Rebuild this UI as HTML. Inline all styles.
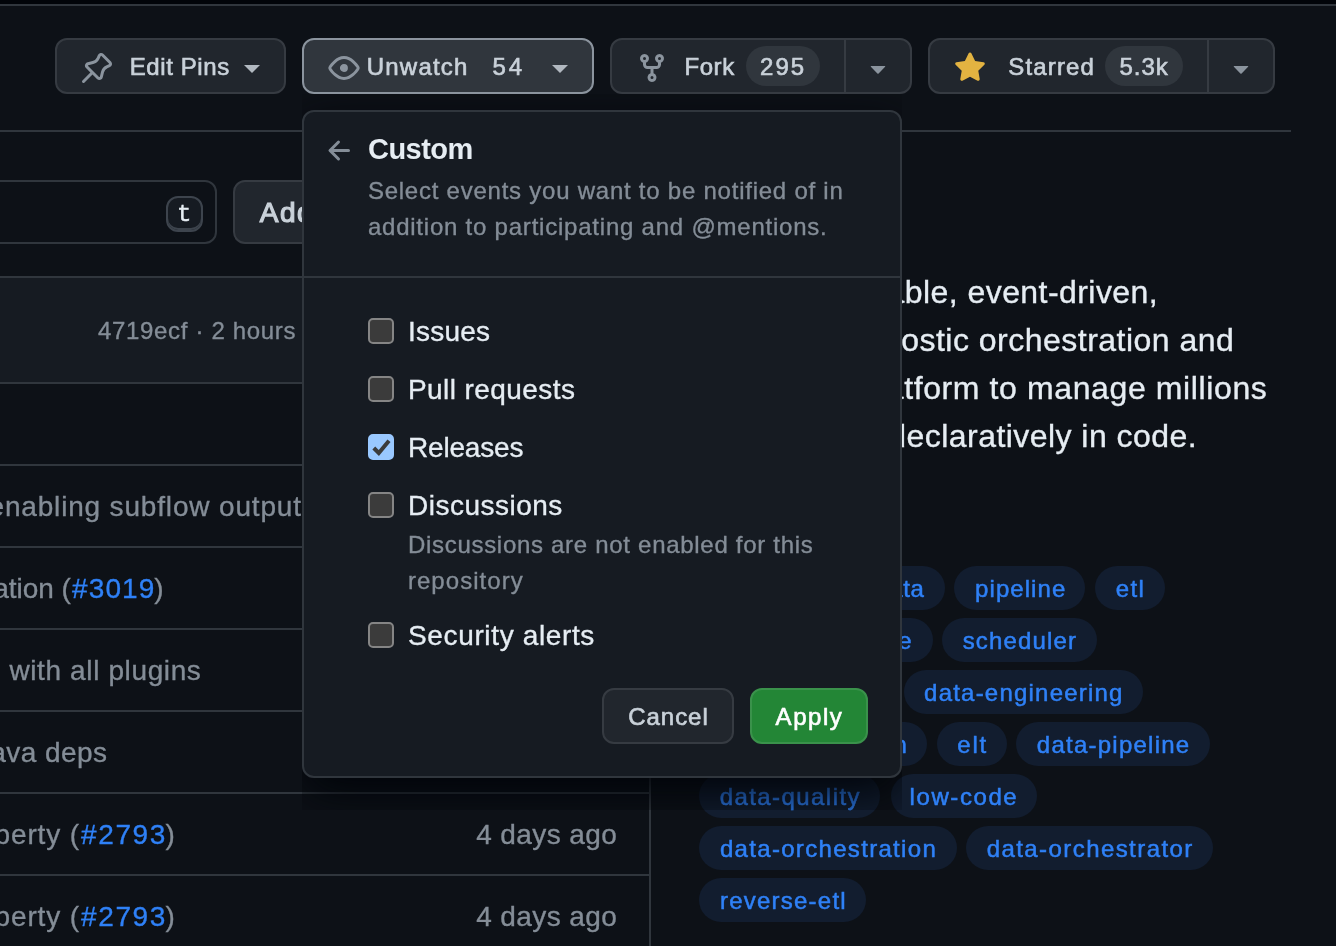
<!DOCTYPE html>
<html lang="en">
<head>
<meta charset="utf-8">
<title>kestra-io/kestra</title>
<style>
*{box-sizing:border-box}
html,body{margin:0;padding:0}
body{width:1336px;height:946px;overflow:hidden;background:#0d1117;position:relative;font-family:'Liberation Sans',sans-serif;}
.abs,.t,.btn,.pill,.tag,.line,.cb{position:absolute}
.t{white-space:pre;display:block}
.btn{background:#21262d;border:2px solid #363b42;border-radius:12px;height:56px;top:38px}
.pill{background:#30363d;border-radius:40px;height:40px;top:46px}
.line{background:#30363d}
.tag{height:44px;border-radius:22px;background:#121d2f;display:block}
.tag span{position:absolute;top:0;color:#2f81f7;font-size:24px;line-height:46px;white-space:pre;-webkit-text-stroke:.5px #2f81f7}
.cb{width:26px;height:26px;left:368px;border:2px solid #858585;background:#3b3b3b;border-radius:5px}
.cb.on{background:#99c8ff;border-color:#99c8ff}
svg{position:absolute;overflow:visible}
</style>
</head>
<body>
<div id="app" style="position:absolute;left:0;top:0;width:1336px;height:946px;will-change:transform">
<!-- top strip -->
<div class="abs" style="left:0;top:0;width:1336px;height:4px;background:#010409"></div>
<div class="line" style="left:0;top:4px;width:1336px;height:2px"></div>

<!-- repo action buttons -->
<div class="btn" style="left:55px;width:231px"></div>
<div class="btn" style="left:302px;width:292px;background:#30363d;border-color:#8b949e"></div>
<div class="btn" style="left:610px;width:302px"></div>
<div class="line" style="left:844px;top:40px;width:2px;height:52px;background:#363b42"></div>
<div class="btn" style="left:928px;width:347px"></div>
<div class="line" style="left:1207px;top:40px;width:2px;height:52px;background:#363b42"></div>
<div class="pill" style="left:746px;width:74px"></div>
<div class="pill" style="left:1105px;width:78px"></div>
<!-- icons -->
<svg style="left:81px;top:52px" width="32" height="32" viewBox="0 0 16 16" fill="#8b949e"><path d="m11.294.984 3.722 3.722a1.75 1.75 0 0 1-.504 2.826l-1.327.613a3.089 3.089 0 0 0-1.707 2.084l-.584 2.454c-.317 1.332-1.972 1.8-2.94.832L5.75 11.311 1.78 15.28a.749.749 0 1 1-1.06-1.06l3.969-3.97-2.204-2.204c-.968-.968-.5-2.623.832-2.94l2.454-.584a3.08 3.08 0 0 0 2.084-1.707l.613-1.327a1.75 1.75 0 0 1 2.826-.504ZM6.283 9.723l2.732 2.731a.25.25 0 0 0 .42-.119l.584-2.454a4.586 4.586 0 0 1 2.537-3.098l1.328-.613a.25.25 0 0 0 .072-.404l-3.722-3.722a.25.25 0 0 0-.404.072l-.613 1.328a4.584 4.584 0 0 1-3.098 2.537l-2.454.584a.25.25 0 0 0-.119.42l2.731 2.732Z"/></svg>
<svg style="left:328px;top:52px" width="32" height="32" viewBox="0 0 16 16" fill="#8b949e"><path d="M8 2c1.981 0 3.671.992 4.933 2.078 1.27 1.091 2.187 2.345 2.637 3.023a1.62 1.62 0 0 1 0 1.798c-.45.678-1.367 1.932-2.637 3.023C11.67 13.008 9.981 14 8 14c-1.981 0-3.671-.992-4.933-2.078C1.797 10.83.88 9.576.43 8.898a1.62 1.62 0 0 1 0-1.798c.45-.677 1.367-1.931 2.637-3.022C4.33 2.992 6.019 2 8 2ZM1.679 7.932a.12.12 0 0 0 0 .136c.411.622 1.241 1.75 2.366 2.717C5.176 11.758 6.527 12.5 8 12.5c1.473 0 2.825-.742 3.955-1.715 1.124-.967 1.954-2.096 2.366-2.717a.12.12 0 0 0 0-.136c-.412-.621-1.242-1.75-2.366-2.717C10.824 4.242 9.473 3.500 8 3.500c-1.473 0-2.825.742-3.955 1.715-1.124.967-1.954 2.096-2.366 2.717ZM8 10a2 2 0 1 1-.001-3.999A2 2 0 0 1 8 10Z"/></svg>
<svg style="left:636px;top:52px" width="32" height="32" viewBox="0 0 16 16" fill="#8b949e"><path d="M5 5.372v.878c0 .414.336.75.75.75h4.500a.75.75 0 0 0 .75-.75v-.878a2.250 2.250 0 1 1 1.500 0v.878a2.250 2.250 0 0 1-2.250 2.250h-1.500v2.128a2.251 2.251 0 1 1-1.500 0V8.500h-1.500A2.250 2.250 0 0 1 3.500 6.250v-.878a2.250 2.250 0 1 1 1.500 0ZM5 3.250a.75.75 0 1 0-1.500 0 .75.75 0 0 0 1.500 0Zm6.750.750a.75.75 0 1 0 0-1.500.75.75 0 0 0 0 1.500Zm-3 8.750a.75.75 0 1 0-1.500 0 .75.75 0 0 0 1.500 0Z"/></svg>
<svg style="left:954px;top:52px" width="32" height="32" viewBox="0 0 16 16" fill="#e3b341"><path d="M8 .25a.75.75 0 0 1 .673.418l1.882 3.815 4.210.612a.75.75 0 0 1 .416 1.279l-3.046 2.970.719 4.192a.751.751 0 0 1-1.088.791L8 12.347l-3.766 1.980a.75.75 0 0 1-1.088-.79l.720-4.194L.818 6.374a.75.75 0 0 1 .416-1.280l4.210-.611L7.327.668A.75.75 0 0 1 8 .25Z"/></svg>
<!-- carets -->
<div class="abs" style="left:244px;top:65px;border:8px solid transparent;border-top-color:#b1b8c0;border-bottom:0"></div>
<div class="abs" style="left:552px;top:65px;border:8px solid transparent;border-top-color:#b1b8c0;border-bottom:0"></div>
<svg style="left:862px;top:52px" width="32" height="32" viewBox="0 0 16 16" fill="#8b949e"><path d="m4.427 7.427 3.396 3.396a.25.25 0 0 0 .354 0l3.396-3.396A.25.25 0 0 0 11.396 7H4.604a.25.25 0 0 0-.177.427Z"/></svg>
<svg style="left:1225px;top:52px" width="32" height="32" viewBox="0 0 16 16" fill="#8b949e"><path d="m4.427 7.427 3.396 3.396a.25.25 0 0 0 .354 0l3.396-3.396A.25.25 0 0 0 11.396 7H4.604a.25.25 0 0 0-.177.427Z"/></svg>

<!-- header divider -->
<div class="line" style="left:0;top:130px;width:1291px;height:2px"></div>

<!-- file search + add button -->
<div class="abs" style="left:-20px;top:180px;width:237px;height:64px;border:2px solid #30363d;border-radius:12px;background:#0d1117"></div>
<div class="abs" style="left:166px;top:196px;width:37px;height:36px;border:2px solid #3d444d;border-radius:12px;background:#161b22;box-shadow:inset 0 -2px 0 #3d444d"></div>
<span class="t" style="left:177px;top:201px;font-family:'Liberation Mono',monospace;font-size:24px;line-height:28px;color:#e6edf3;-webkit-text-stroke:.4px #e6edf3">t</span>
<div class="abs" style="left:233px;top:180px;width:200px;height:64px;border:2px solid #363b42;border-radius:12px;background:#21262d"></div>

<!-- file table -->
<div class="abs" style="left:-20px;top:276px;width:671px;height:700px;border:2px solid #30363d;border-radius:12px;background:#0d1117"></div>
<div class="abs" style="left:-20px;top:278px;width:669px;height:104px;background:#161b22;border-radius:10px 10px 0 0"></div>
<div class="line" style="left:0;top:382px;width:649px;height:2px"></div>
<div class="line" style="left:0;top:464px;width:649px;height:2px"></div>
<div class="line" style="left:0;top:546px;width:649px;height:2px"></div>
<div class="line" style="left:0;top:628px;width:649px;height:2px"></div>
<div class="line" style="left:0;top:710px;width:649px;height:2px"></div>
<div class="line" style="left:0;top:792px;width:649px;height:2px"></div>
<div class="line" style="left:0;top:874px;width:649px;height:2px"></div>

<span class="t" style="top:49px;font-size:24px;line-height:36px;letter-spacing:0.593px;color:#c9d1d9;-webkit-text-stroke:0.65px #c9d1d9;left:129.7px;">Edit Pins</span>
<span class="t" style="top:49px;font-size:24px;line-height:36px;letter-spacing:1.231px;color:#c9d1d9;-webkit-text-stroke:0.65px #c9d1d9;left:366.7px;">Unwatch</span>
<span class="t" style="top:49px;font-size:24px;line-height:36px;letter-spacing:3.000px;color:#c9d1d9;-webkit-text-stroke:0.65px #c9d1d9;left:492.4px;">54</span>
<span class="t" style="top:49px;font-size:24px;line-height:36px;letter-spacing:0.587px;color:#c9d1d9;-webkit-text-stroke:0.65px #c9d1d9;left:684.4px;">Fork</span>
<span class="t" style="top:49px;font-size:24px;line-height:36px;letter-spacing:2.057px;color:#c9d1d9;-webkit-text-stroke:0.65px #c9d1d9;left:760.0px;">295</span>
<span class="t" style="top:49px;font-size:24px;line-height:36px;letter-spacing:1.159px;color:#c9d1d9;-webkit-text-stroke:0.65px #c9d1d9;left:1008.3px;">Starred</span>
<span class="t" style="top:49px;font-size:24px;line-height:36px;letter-spacing:0.928px;color:#c9d1d9;-webkit-text-stroke:0.65px #c9d1d9;left:1119.6px;">5.3k</span>
<span class="t" style="top:192px;font-size:28px;line-height:42px;letter-spacing:1.536px;color:#c9d1d9;-webkit-text-stroke:1.2px #c9d1d9;left:259.8px;">Add</span>
<span class="t" style="top:313px;font-size:24px;line-height:36px;letter-spacing:0.669px;color:#848d97;-webkit-text-stroke:0.35px #848d97;left:98.0px;">4719ecf · 2 hours</span>
<span class="t" style="top:486px;font-size:28px;line-height:42px;letter-spacing:0.830px;color:#848d97;-webkit-text-stroke:0.35px #848d97;right:1034.2px;">enabling subflow output</span>
<span class="t" style="top:568px;font-size:28px;line-height:42px;letter-spacing:-0.025px;color:#848d97;-webkit-text-stroke:0.35px #848d97;left:-6.8px;">ation (</span>
<span class="t" style="top:568px;font-size:28px;line-height:42px;letter-spacing:1.126px;color:#2f81f7;-webkit-text-stroke:0.35px #2f81f7;left:72.0px;">#3019</span>
<span class="t" style="top:568px;font-size:28px;line-height:42px;letter-spacing:-0.248px;color:#848d97;-webkit-text-stroke:0.35px #848d97;left:154.2px;">)</span>
<span class="t" style="top:650px;font-size:28px;line-height:42px;letter-spacing:0.625px;color:#848d97;-webkit-text-stroke:0.35px #848d97;right:1134.5px;">e with all plugins</span>
<span class="t" style="top:732px;font-size:28px;line-height:42px;letter-spacing:0.450px;color:#848d97;-webkit-text-stroke:0.35px #848d97;right:1228.5px;">ava deps</span>
<span class="t" style="top:814px;font-size:28px;line-height:42px;letter-spacing:0.840px;color:#848d97;-webkit-text-stroke:0.35px #848d97;right:1256.2px;">perty (</span>
<span class="t" style="top:814px;font-size:28px;line-height:42px;letter-spacing:1.576px;color:#2f81f7;-webkit-text-stroke:0.35px #2f81f7;left:81.1px;">#2793</span>
<span class="t" style="top:814px;font-size:28px;line-height:42px;letter-spacing:-0.348px;color:#848d97;-webkit-text-stroke:0.35px #848d97;left:165.6px;">)</span>
<span class="t" style="top:814px;font-size:28px;line-height:42px;letter-spacing:0.409px;color:#848d97;-webkit-text-stroke:0.35px #848d97;left:476.2px;">4 days ago</span>
<span class="t" style="top:896px;font-size:28px;line-height:42px;letter-spacing:0.840px;color:#848d97;-webkit-text-stroke:0.35px #848d97;right:1256.2px;">perty (</span>
<span class="t" style="top:896px;font-size:28px;line-height:42px;letter-spacing:1.576px;color:#2f81f7;-webkit-text-stroke:0.35px #2f81f7;left:81.1px;">#2793</span>
<span class="t" style="top:896px;font-size:28px;line-height:42px;letter-spacing:-0.348px;color:#848d97;-webkit-text-stroke:0.35px #848d97;left:165.6px;">)</span>
<span class="t" style="top:896px;font-size:28px;line-height:42px;letter-spacing:0.409px;color:#848d97;-webkit-text-stroke:0.35px #848d97;left:476.2px;">4 days ago</span>
<span class="t" style="top:268px;font-size:32px;line-height:48px;letter-spacing:0.435px;color:#e6edf3;-webkit-text-stroke:0.35px #e6edf3;right:177.9px;">Infinitely scalable, event-driven,</span>
<span class="t" style="top:316px;font-size:32px;line-height:48px;letter-spacing:0.491px;color:#e6edf3;-webkit-text-stroke:0.35px #e6edf3;right:101.6px;">language-agnostic orchestration and</span>
<span class="t" style="top:364px;font-size:32px;line-height:48px;letter-spacing:0.612px;color:#e6edf3;-webkit-text-stroke:0.35px #e6edf3;right:68.6px;">scheduling platform to manage millions</span>
<span class="t" style="top:412px;font-size:32px;line-height:48px;letter-spacing:0.446px;color:#e6edf3;-webkit-text-stroke:0.35px #e6edf3;right:139.0px;">of workflows declaratively in code.</span>

<!-- topics -->
<a class="tag" style="left:686.4px;top:566px;width:88.6px"><span style="left:21.4px;letter-spacing:0.600px">java</span></a>
<a class="tag" style="left:704.6px;top:566px;width:140.4px"><span style="left:21.4px;letter-spacing:0.600px">workflow</span></a>
<a class="tag" style="left:853.0px;top:566px;width:92.2px"><span style="left:22.3px;letter-spacing:0.600px">data</span></a>
<a class="tag" style="left:953.9px;top:566px;width:130.9px"><span style="left:21.2px;letter-spacing:1.067px">pipeline</span></a>
<a class="tag" style="left:1094.8px;top:566px;width:70.1px"><span style="left:20.9px;letter-spacing:1.420px">etl</span></a>
<a class="tag" style="left:546.2px;top:618px;width:188.8px"><span style="left:21.4px;letter-spacing:0.600px">orchestration</span></a>
<a class="tag" style="left:708.5px;top:618px;width:224.6px"><span style="left:21.4px;letter-spacing:0.600px">workflow-engine</span></a>
<a class="tag" style="left:941.7px;top:618px;width:155.3px"><span style="left:21.0px;letter-spacing:1.155px">scheduler</span></a>
<a class="tag" style="left:676.4px;top:670px;width:218.6px"><span style="left:21.4px;letter-spacing:0.600px">data-integration</span></a>
<a class="tag" style="left:904.0px;top:670px;width:238.8px"><span style="left:20.1px;letter-spacing:1.211px">data-engineering</span></a>
<a class="tag" style="left:565.9px;top:722px;width:194.1px"><span style="left:21.4px;letter-spacing:0.600px">hacktoberfest</span></a>
<a class="tag" style="left:768.0px;top:722px;width:158.9px"><span style="left:14.7px;letter-spacing:0.600px">automation</span></a>
<a class="tag" style="left:936.9px;top:722px;width:70.1px"><span style="left:20.4px;letter-spacing:1.820px">elt</span></a>
<a class="tag" style="left:1015.8px;top:722px;width:194.1px"><span style="left:21.0px;letter-spacing:1.247px">data-pipeline</span></a>
<a class="tag" style="left:698.9px;top:774px;width:181.5px"><span style="left:20.8px;letter-spacing:1.429px">data-quality</span></a>
<a class="tag" style="left:890.8px;top:774px;width:146.3px"><span style="left:18.8px;letter-spacing:1.579px">low-code</span></a>
<a class="tag" style="left:699.0px;top:826px;width:257.6px"><span style="left:20.9px;letter-spacing:1.320px">data-orchestration</span></a>
<a class="tag" style="left:966.3px;top:826px;width:246.9px"><span style="left:20.4px;letter-spacing:1.427px">data-orchestrator</span></a>
<a class="tag" style="left:699.0px;top:878px;width:166.7px"><span style="left:20.9px;letter-spacing:1.243px">reverse-etl</span></a>

<!-- popup shadow (clipped) -->
<div class="abs" style="left:302px;top:94px;width:600px;height:716px;overflow:hidden;pointer-events:none">
  <div class="abs" style="left:0;top:16px;width:600px;height:668px;border-radius:12px;box-shadow:0 16px 48px #010409"></div>
</div>
<!-- popup -->
<div class="abs" id="popup" style="left:302px;top:110px;width:600px;height:668px;border:2px solid #30363d;border-radius:12px;background:#161b22"></div>
<div class="line" style="left:304px;top:276px;width:596px;height:2px"></div>
<svg style="left:324px;top:135px" width="32" height="32" viewBox="0 0 16 16" fill="#848d97"><path d="M7.780 12.530a.75.75 0 0 1-1.060 0L2.470 8.280a.75.75 0 0 1 0-1.060l4.250-4.250a.751.751 0 0 1 1.042.018.751.751 0 0 1 .018 1.042L4.810 7h7.440a.75.75 0 0 1 0 1.500H4.810l2.970 2.970a.75.75 0 0 1 0 1.060Z"/></svg>
<div class="cb" style="top:318px"></div>
<div class="cb" style="top:376px"></div>
<div class="cb on" style="top:434px"></div>
<svg style="left:368px;top:434px" width="26" height="26" viewBox="0 0 26 26" fill="none" stroke="#3b3b3b" stroke-width="4"><path d="M5.800 14 10.800 19 21 6.800"/></svg>
<div class="cb" style="top:492px"></div>
<div class="cb" style="top:622px"></div>
<div class="abs" style="left:602px;top:688px;width:132px;height:56px;border:2px solid #363b42;border-radius:12px;background:#21262d"></div>
<div class="abs" style="left:750px;top:688px;width:118px;height:56px;border:2px solid #3a924b;border-radius:12px;background:#238636"></div>
<span class="t" style="top:127px;font-size:29px;line-height:44px;letter-spacing:-0.521px;color:#e6edf3;font-weight:700;left:368.0px;">Custom</span>
<span class="t" style="top:173px;font-size:24px;line-height:36px;letter-spacing:0.761px;color:#848d97;-webkit-text-stroke:0.35px #848d97;left:367.9px;">Select events you want to be notified of in</span>
<span class="t" style="top:209px;font-size:24px;line-height:36px;letter-spacing:0.776px;color:#848d97;-webkit-text-stroke:0.35px #848d97;left:367.9px;">addition to participating and @mentions.</span>
<span class="t" style="top:311px;font-size:28px;line-height:42px;letter-spacing:0.228px;color:#e6edf3;-webkit-text-stroke:0.35px #e6edf3;left:408.0px;">Issues</span>
<span class="t" style="top:369px;font-size:28px;line-height:42px;letter-spacing:0.425px;color:#e6edf3;-webkit-text-stroke:0.35px #e6edf3;left:408.0px;">Pull requests</span>
<span class="t" style="top:427px;font-size:28px;line-height:42px;letter-spacing:-0.193px;color:#e6edf3;-webkit-text-stroke:0.35px #e6edf3;left:408.0px;">Releases</span>
<span class="t" style="top:485px;font-size:28px;line-height:42px;letter-spacing:0.499px;color:#e6edf3;-webkit-text-stroke:0.35px #e6edf3;left:408.0px;">Discussions</span>
<span class="t" style="top:527px;font-size:24px;line-height:36px;letter-spacing:0.706px;color:#848d97;-webkit-text-stroke:0.35px #848d97;left:407.9px;">Discussions are not enabled for this</span>
<span class="t" style="top:563px;font-size:24px;line-height:36px;letter-spacing:1.058px;color:#848d97;-webkit-text-stroke:0.35px #848d97;left:407.9px;">repository</span>
<span class="t" style="top:615px;font-size:28px;line-height:42px;letter-spacing:0.641px;color:#e6edf3;-webkit-text-stroke:0.35px #e6edf3;left:408.0px;">Security alerts</span>
<span class="t" style="top:699px;font-size:24px;line-height:36px;letter-spacing:0.948px;color:#c9d1d9;-webkit-text-stroke:0.65px #c9d1d9;left:628.3px;">Cancel</span>
<span class="t" style="top:699px;font-size:24px;line-height:36px;letter-spacing:1.528px;color:#ffffff;-webkit-text-stroke:0.65px #ffffff;left:775.6px;">Apply</span>
</div>
</body>
</html>
